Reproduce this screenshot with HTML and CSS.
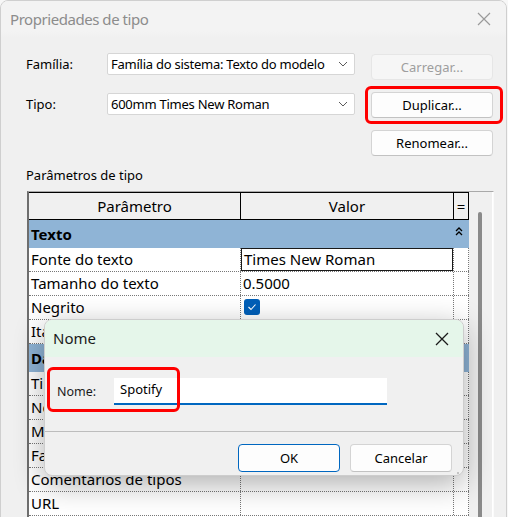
FILE: index.html
```html
<!DOCTYPE html>
<html lang="pt">
<head>
<meta charset="utf-8">
<title>Propriedades de tipo</title>
<link rel="stylesheet" href="styles.css">
</head>
<body>
<div class="window">
  <div class="titlebar">
    <span class="title">Propriedades de tipo</span>
    <svg class="close" width="14" height="14" viewBox="0 0 14 14"><path d="M1 1L13 13M13 1L1 13" stroke="#9a9a9a" stroke-width="1.2" fill="none"/></svg>
  </div>
  <div class="content">
    <div class="top">
      <div class="fields">
        <div class="field">
          <span class="label">Família:</span>
          <div class="select"><span>Família do sistema: Texto do modelo</span><svg width="10" height="6" viewBox="0 0 10 6"><path d="M1 1L5 5L9 1" stroke="#5a5a5a" stroke-width="1" fill="none"/></svg></div>
        </div>
        <div class="field">
          <span class="label">Tipo:</span>
          <div class="select"><span>600mm Times New Roman</span><svg width="10" height="6" viewBox="0 0 10 6"><path d="M1 1L5 5L9 1" stroke="#5a5a5a" stroke-width="1" fill="none"/></svg></div>
        </div>
      </div>
      <div class="buttons">
        <button class="btn disabled">Carregar...</button>
        <div class="hl-wrap">
          <button class="btn">Duplicar...</button>
          <span class="highlight hl-dup"></span>
        </div>
        <button class="btn">Renomear...</button>
      </div>
    </div>
    <div class="section-label">Parâmetros de tipo</div>
    <div class="grid-frame">
      <div class="grid">
        <div class="row header">
          <div class="cell c1">Parâmetro</div>
          <div class="cell c2">Valor</div>
          <div class="cell c3">=</div>
        </div>
        <div class="row group">
          <div class="gname">Texto</div>
          <svg class="collapse" width="8" height="9" viewBox="0 0 8 9"><path d="M1 4L4 1L7 4M1 8L4 5L7 8" stroke="#000" stroke-width="1.3" fill="none"/></svg>
        </div>
        <div class="row">
          <div class="cell c1">Fonte do texto</div>
          <div class="cell c2"><div class="edit">Times New Roman</div></div>
          <div class="cell c3"></div>
        </div>
        <div class="row">
          <div class="cell c1">Tamanho do texto</div>
          <div class="cell c2">0.5000</div>
          <div class="cell c3"></div>
        </div>
        <div class="row">
          <div class="cell c1">Negrito</div>
          <div class="cell c2"><span class="check"><svg width="10" height="8" viewBox="0 0 10 8"><path d="M1.5 4L4 6.5L8.5 1.5" stroke="#fff" stroke-width="1.1" fill="none"/></svg></span></div>
          <div class="cell c3"></div>
        </div>
        <div class="row">
          <div class="cell c1">Itálico</div>
          <div class="cell c2"></div>
          <div class="cell c3"></div>
        </div>
        <div class="row group">
          <div class="gname">Dados de identidade</div>
        </div>
        <div class="row">
          <div class="cell c1">Tipo de imagem</div>
          <div class="cell c2"></div>
          <div class="cell c3"></div>
        </div>
        <div class="row">
          <div class="cell c1">Nota-chave</div>
          <div class="cell c2"></div>
          <div class="cell c3"></div>
        </div>
        <div class="row">
          <div class="cell c1">Modelo</div>
          <div class="cell c2"></div>
          <div class="cell c3"></div>
        </div>
        <div class="row">
          <div class="cell c1">Fabricante</div>
          <div class="cell c2"></div>
          <div class="cell c3"></div>
        </div>
        <div class="row">
          <div class="cell c1">Comentários de tipos</div>
          <div class="cell c2"></div>
          <div class="cell c3"></div>
        </div>
        <div class="row">
          <div class="cell c1">URL</div>
          <div class="cell c2"></div>
          <div class="cell c3"></div>
        </div>
      </div>
      <div class="scroll"><div class="thumb"></div></div>
    </div>
  </div>

  <div class="modal">
    <div class="m-titlebar">
      <span class="m-title">Nome</span>
      <svg class="m-close" width="14" height="14" viewBox="0 0 14 14"><path d="M1 1L13 13M13 1L1 13" stroke="#1a1a1a" stroke-width="1.3" fill="none"/></svg>
    </div>
    <div class="m-body">
      <div class="m-field">
        <span class="m-label">Nome:</span>
        <div class="m-input">Spotify</div>
        <span class="highlight hl-name"></span>
      </div>
      <div class="m-sep"></div>
      <div class="m-buttons">
        <button class="btn m-btn default">OK</button>
        <button class="btn m-btn">Cancelar</button>
      </div>
      <svg class="grip" width="9" height="9" viewBox="0 0 9 9"><g fill="#c4c4c4"><rect x="6" y="0" width="2" height="2"/><rect x="3" y="3" width="2" height="2"/><rect x="6" y="3" width="2" height="2"/><rect x="0" y="6" width="2" height="2"/><rect x="3" y="6" width="2" height="2"/><rect x="6" y="6" width="2" height="2"/></g></svg>
    </div>
  </div>
</div>
</body>
</html>
```

FILE: styles.css
```css
html, body {
  margin: 0;
  padding: 0;
  background: #f7f7f7;
  overflow: hidden;
}
body {
  font-family: "Noto Sans", "DejaVu Sans", sans-serif;
  width: 508px;
  height: 517px;
}
.window {
  position: relative;
  width: 505px;
  height: 540px;
  border: 1px solid #cfcfcf;
  border-radius: 8px 8px 0 0;
  background: #f0f0f0;
  overflow: hidden;
}
.titlebar {
  height: 37px;
  display: flex;
  align-items: center;
  justify-content: space-between;
  padding: 0 15px 0 9px;
  background: linear-gradient(#f3f3f3, #f3f3f3 80%, #f0f0f0);
}
.title {
  font-size: 15px;
  color: #8c8c8c;
  letter-spacing: -0.45px;
  margin-top: -1px;
}
.close { margin-top: -2px; }
.content {
  padding: 15px 0 0 25px;
}
.top {
  display: flex;
  align-items: flex-start;
  gap: 16px;
}
.fields {
  display: flex;
  flex-direction: column;
  gap: 18px;
}
.field {
  display: flex;
  align-items: center;
}
.label {
  width: 81px;
  font-size: 13px;
  color: #000;
}
.select {
  box-sizing: border-box;
  width: 248px;
  height: 22px;
  background: #fff;
  border: 1px solid #d6d6d6;
  border-radius: 2px;
  display: flex;
  align-items: center;
  justify-content: space-between;
  padding: 0 6px 0 3px;
  font-size: 13px;
  letter-spacing: -0.25px;
  color: #000;
}
.buttons {
  margin-top: 1px;
  display: flex;
  flex-direction: column;
  gap: 12px;
}
.btn {
  width: 122px;
  height: 26px;
  font-family: inherit;
  font-size: 13px;
  color: #000;
  background: #fdfdfd;
  border: 1px solid #d4d4d4;
  border-bottom-color: #c2c2c2;
  border-radius: 4px;
  padding: 0;
}
.btn.disabled {
  color: #9e9e9e;
  background: #f6f6f6;
  border-color: #e6e6e6;
}
.hl-wrap { position: relative; height: 26px; }
.highlight {
  position: absolute;
  border: 3px solid #f00;
  border-radius: 6px;
  pointer-events: none;
}
.hl-dup { left: -6px; right: -10px; top: -6px; bottom: -6px; }
.section-label {
  font-size: 13px;
  margin-top: 10px;
  line-height: 18px;
  color: #000;
}
.grid-frame {
  margin: 7px 0 0 1px;
  width: 464px;
  height: 340px;
  display: flex;
  border-top: 1px solid #a9a9a9;
  border-left: 2px solid #6e6e6e;
  border-right: 1px solid #fbfbfb;
  background: #fff;
}
.grid {
  width: 440px;
  font-size: 15px;
  color: #000;
}
.row {
  display: flex;
  height: 24px;
  box-sizing: border-box;
  border-bottom: 1px dotted #777;
}
.cell {
  box-sizing: border-box;
  height: 23px;
  line-height: 23px;
  padding-left: 2px;
  white-space: nowrap;
  overflow: hidden;
}
.c1 { width: 212px; border-right: 1px dotted #777; }
.c2 { width: 213px; border-right: 1px dotted #777; }
.c3 { width: 15px; border-right: 1px dotted #777; }
.row.header {
  height: 28px;
  background: #f0f0f0;
  border-bottom: 1px solid #000;
}
.row.header .cell {
  height: 27px;
  line-height: 27px;
  text-align: center;
  padding: 0;
  border-right: 1px solid #000;
  border-top: 1px solid #000;
}
.row.group {
  height: 28px;
  background: #8fb4d6;
  border-bottom: 0;
  align-items: center;
  justify-content: space-between;
  padding: 0 6px 0 2px;
  width: 440px;
}
.gname {
  font-weight: bold;
  font-size: 15px;
  margin-top: -1px;
}
.collapse { margin-top: -6px; }
.edit {
  margin-left: -2px;
  height: 23px;
  box-sizing: border-box;
  border: 1px solid #1a1a1a;
  line-height: 21px;
  padding-left: 2px;
  background: #fff;
}
.check {
  display: inline-flex;
  align-items: center;
  justify-content: center;
  width: 16px;
  height: 16px;
  margin: 3px 0 0 1px;
  border-radius: 3px;
  background: #005fb8;
  vertical-align: top;
}
.scroll {
  width: 23px;
  background: #f0f0f0;
  display: flex;
  justify-content: center;
  padding-top: 20px;
}
.thumb {
  width: 4px;
  height: 400px;
  background: #8a8a8a;
  border-radius: 2px 2px 0 0;
  margin-left: -2px;
}

/* modal dialog */
.modal {
  position: absolute;
  left: 43px;
  top: 318px;
  width: 418px;
  height: 155px;
  border: 1px solid #cdcdcd;
  border-radius: 8px;
  background: #f0f0f0;
  box-shadow: 0 8px 30px rgba(0,0,0,0.32);
  overflow: hidden;
}
.m-titlebar {
  height: 37px;
  background: #e5f6ea;
  display: flex;
  align-items: center;
  justify-content: space-between;
  padding: 0 14px 0 8px;
}
.m-title {
  font-size: 15px;
  color: #1a1a1a;
  margin-top: -1px;
}
.m-body {
  position: relative;
  padding-top: 21px;
}
.m-field {
  position: relative;
  display: flex;
  align-items: center;
  padding-left: 12px;
}
.m-label {
  width: 57px;
  font-size: 12.5px;
  color: #1a1a1a;
}
.m-input {
  width: 267px;
  height: 25px;
  padding-left: 6px;
  background: #fff;
  border-bottom: 2px solid #0067c0;
  font-size: 13px;
  line-height: 23px;
  color: #000;
}
.hl-name { left: 2px; top: -11px; width: 127px; height: 39px; }
.m-sep {
  margin-top: 26px;
  height: 1px;
  background: #bdbdbd;
}
.m-buttons {
  display: flex;
  justify-content: flex-end;
  gap: 10px;
  padding: 12px 11px 0 0;
}
.m-btn {
  width: 102px;
  height: 28px;
}
.m-btn.default {
  border: 1px solid #0067c0;
}
.grip {
  position: absolute;
  right: 3px;
  bottom: -9px;
}
```
